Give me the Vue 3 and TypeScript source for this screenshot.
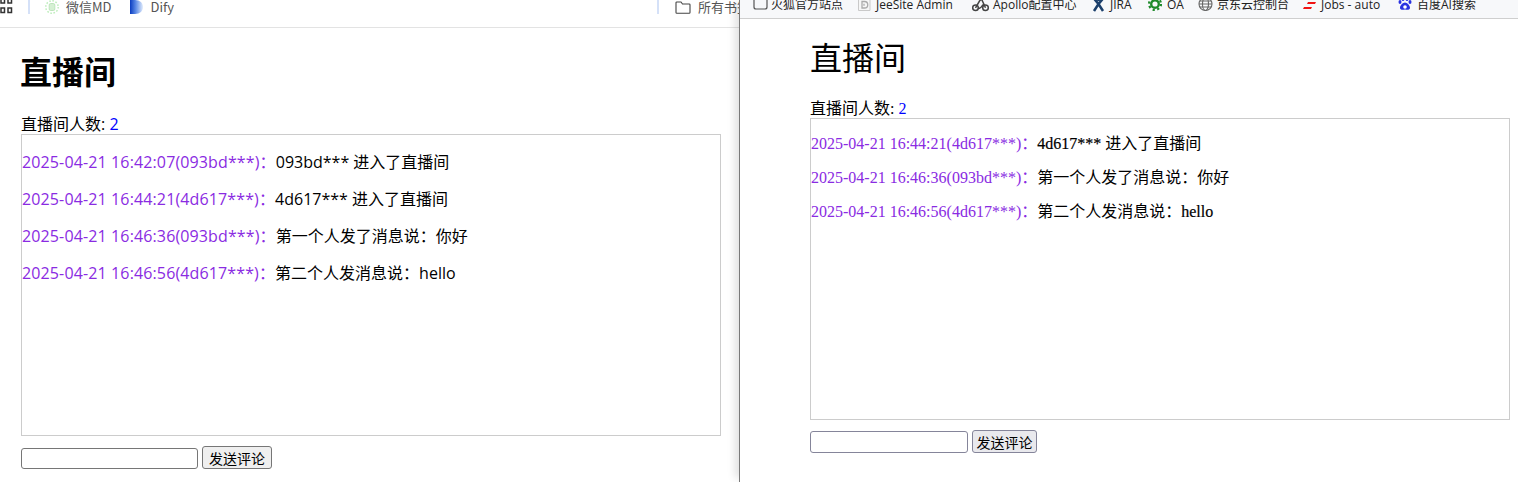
<script setup lang="ts">
interface Part { t: string; heavy?: boolean }
interface Msg { time: string; parts: Part[] }
const leftMsgs: Msg[] = [
  { time: '2025-04-21 16:42:07(093bd***)：', parts: [{ t: '093bd*** 进入了直播间' }] },
  { time: '2025-04-21 16:44:21(4d617***)：', parts: [{ t: '4d617*** 进入了直播间' }] },
  { time: '2025-04-21 16:46:36(093bd***)：', parts: [{ t: '第一个人发了消息说：你好' }] },
  { time: '2025-04-21 16:46:56(4d617***)：', parts: [{ t: '第二个人发消息说：hello' }] },
]
const rightMsgs: Msg[] = [
  { time: '2025-04-21 16:44:21(4d617***)：', parts: [{ t: '4d617***', heavy: true }, { t: ' 进入了直播间' }] },
  { time: '2025-04-21 16:46:36(093bd***)：', parts: [{ t: '第一个人发了消息说：你好' }] },
  { time: '2025-04-21 16:46:56(4d617***)：', parts: [{ t: '第二个人发消息说：' }, { t: 'hello', heavy: true }] },
]
</script>

<template>
  <div class="screen">
    <section class="pane left">
      <div class="bar bar-left">
        <svg class="apps" width="13" height="14" viewBox="0 0 13 14"><g fill="none" stroke="#333" stroke-width="1.500"><rect x="1" y="-3" width="3.500" height="6"/><rect x="8" y="-3" width="3.500" height="6"/><rect x="1" y="8" width="3.500" height="4.500"/><rect x="8" y="8" width="3.500" height="4.500"/></g></svg>
        <i class="sep first"></i>
        <svg class="ic" width="14" height="14" viewBox="0 0 14 14"><circle cx="7" cy="7" r="6.200" fill="none" stroke="#bfeebd" stroke-width="1.500" stroke-dasharray="1.600 1.600"/><rect x="4.200" y="3.500" width="5.600" height="7" rx="1.500" fill="#d5f0d3" stroke="#bde5bb"/></svg>
        <span class="bm wx">微信MD</span>
        <svg class="ic dify" width="13" height="14" viewBox="0 0 13 14"><defs><linearGradient id="d" x1="0" x2="1"><stop offset="0" stop-color="#0a3cc0"/><stop offset=".45" stop-color="#5d8be6"/><stop offset="1" stop-color="#e3edfc"/></linearGradient></defs><path d="M0 0h5c5 0 8 3 8 7s-3 7-8 7H0z" fill="url(#d)"/></svg>
        <span class="bm">Dify</span>
        <i class="sep second"></i>
        <svg class="ic folder" width="16" height="13" viewBox="0 0 16 13"><path d="M1 2.500V11.500a.8.8 0 0 0 .8.8h12.400a.8.8 0 0 0 .8-.8V3.800a.8.8 0 0 0-.8-.8H7.500L6 1H1.800A.8.8 0 0 0 1 1.800z" fill="none" stroke="#444" stroke-width="1.100"/></svg>
        <span class="bm clip">所有书签</span>
      </div>
      <div class="content content-left">
        <h1 class="title-left">直播间</h1>
        <div class="count count-left">直播间人数: <span class="num">2</span></div>
        <div class="box box-left">
          <p v-for="m in leftMsgs" :key="m.time" class="msg msg-left"><span class="time">{{ m.time }}</span><span v-for="p in m.parts" :key="p.t">{{ p.t }}</span></p>
        </div>
        <div class="form form-left">
          <input class="field field-left" type="text" />
          <button class="send" type="button">发送评论</button>
        </div>
      </div>
    </section>

    <section class="pane right">
      <div class="bar bar-right">
        <span class="rb b1"><svg width="15" height="12" viewBox="0 0 15 12"><path d="M1 -2V8a2 2 0 0 0 2 2h9a2 2 0 0 0 2-2V-2" fill="none" stroke="#555" stroke-width="1.200"/></svg>火狐官方站点</span>
        <span class="rb b2"><svg width="14" height="14" viewBox="0 0 14 14"><path d="M1.500 -1h9l2.500 3v10.500h-11.500z" fill="#f6f6f6" stroke="#c9c9c9"/><path d="M5 3.500h2.500a3.200 3.200 0 0 1 0 6.500H5zM7 5.800v2" fill="none" stroke="#aaa" stroke-width="1.300"/></svg>JeeSite Admin</span>
        <span class="rb b3"><svg width="17" height="14" viewBox="0 0 17 14"><g fill="none" stroke="#444" stroke-width="1.500"><circle cx="3.500" cy="9.800" r="2.800"/><circle cx="13.500" cy="9.800" r="2.800"/><path d="M3.500 9.800 7.500 3l2-2 4 8.800M6 10.500c2.500 0 4-2 5-4"/></g></svg>Apollo配置中心</span>
        <span class="rb b4"><svg width="13" height="14" viewBox="0 0 13 14"><circle cx="6.500" cy="1.500" r="1.800" fill="#1b3f6b"/><path d="M1.500 0 6.500 6 11.500 0M6.500 6 2 13M6.500 6 11 13" fill="none" stroke="#1b3f6b" stroke-width="2.500"/></svg>JIRA</span>
        <span class="rb b5"><svg width="14" height="14" viewBox="0 0 14 14"><circle cx="7" cy="6" r="3.800" fill="none" stroke="#1e8a2a" stroke-width="2.400"/><circle cx="7" cy="6" r="6" fill="none" stroke="#1e8a2a" stroke-width="2.200" stroke-dasharray="2.200 2.500"/></svg>OA</span>
        <span class="rb b6"><svg width="15" height="14" viewBox="0 0 15 14"><g fill="none" stroke="#666" stroke-width="1.100"><circle cx="7.500" cy="6" r="6.500"/><ellipse cx="7.500" cy="6" rx="3" ry="6.500"/><path d="M1 6h13M2 3h11M2 9h11"/></g></svg>京东云控制台</span>
        <span class="rb b7"><svg width="13" height="12" viewBox="0 0 13 12"><path d="M5 3h8l-1 2H4zM1 8h8L8 10H0z" fill="#f01414"/></svg>Jobs - auto</span>
        <span class="rb b8"><svg width="14" height="14" viewBox="0 0 14 14"><g fill="#2932e1"><ellipse cx="2" cy="4" rx="1.500" ry="2"/><ellipse cx="5" cy="1" rx="1.500" ry="2"/><ellipse cx="9" cy="1" rx="1.500" ry="2"/><ellipse cx="12" cy="4" rx="1.500" ry="2"/></g><path d="M7 4.500c-2 0-5 3-5 5.200 0 2.300 2.500 2.300 5 1.700 2.500.6 5 .6 5-1.700 0-2.200-3-5.200-5-5.200z" fill="#2932e1"/><circle cx="7" cy="9" r="1.800" fill="#fff"/></svg>百度AI搜索</span>
      </div>
      <div class="content content-right">
        <h1 class="title-right">直播间</h1>
        <div class="count">直播间人数: <span class="num">2</span></div>
        <div class="box">
          <p v-for="m in rightMsgs" :key="m.time" class="msg"><span class="time">{{ m.time }}</span><span v-for="p in m.parts" :key="p.t" :class="{ heavy: p.heavy }">{{ p.t }}</span></p>
        </div>
        <div class="form">
          <input class="field field-right" type="text" />
          <button class="send send-right" type="button">发送评论</button>
        </div>
      </div>
    </section>
  </div>
</template>

<style>
html, body { margin: 0; background: #fff; overflow: hidden; }
</style>

<style scoped>
.screen {
  display: flex;
  width: 1518px;
  height: 482px;
  overflow: hidden;
  background: #fff;
  color: #000;
}
.pane { height: 482px; box-sizing: border-box; overflow: hidden; }
.left {
  width: 739px;
  flex: none;
  font-family: "Open Sans", "Noto Sans CJK SC", sans-serif;
}
.right {
  flex: 1;
  border-left: 1px solid #7a7a7a;
  box-shadow: -8px 0 8px -4px rgba(0, 0, 0, .12);
  position: relative;
  font-family: "Liberation Serif", "Noto Sans CJK SC", serif;
}
.bar { display: flex; align-items: center; box-sizing: border-box; overflow: hidden; white-space: nowrap; }
.bar-left { height: 28px; border-bottom: 1px solid #e3e3e3; padding: 0 0 13px; font: 13px/14px "Noto Sans CJK SC", "Liberation Sans", sans-serif; color: #555; }
.apps { flex: none; }
.sep { flex: none; width: 2px; height: 14px; background: #d5e1f8; }
.sep.first { margin: 0 15px; }
.sep.second { margin: 0 16px 0 auto; }
.ic { flex: none; margin-right: 7px; }
.dify { margin-right: 8px; }
.bm { flex: none; line-height: 14px; }
.wx { margin-right: 18px; }
.clip { width: 41px; overflow: hidden; }
.bar-right {
  height: 19px;
  background: #f7f8fa;
  border-bottom: 1px solid #cfcfcf;
  padding: 0 0 8px 13px;
  font: 12px/12px "Open Sans", "Noto Sans CJK SC", sans-serif;
  color: #222;
}
.rb { display: inline-flex; align-items: center; gap: 4px; line-height: 12px; flex: none; }
.rb svg { flex: none; }
.b1 { width: 104px; gap: 3px; }
.b2 { width: 115px; gap: 5px; }
.b3 { width: 120px; gap: 4px; }
.b4 { width: 56px; gap: 5px; }
.b5 { width: 50px; gap: 5px; }
.b6 { width: 105px; gap: 4px; }
.b7 { width: 95px; gap: 5px; }
.b8 { gap: 5px; }

.content-left { padding: 0 0 0 21px; }
.content-right { padding: 0 0 0 70px; }
.title-left { margin: 23px 0 21px -1px; font-size: 32px; line-height: 42px; font-weight: 700; }
.title-right { margin: 21px 0 21px; font-size: 32px; line-height: 38px; font-weight: 400; }
.count { font-size: 16px; line-height: 19px; }
.count-left { line-height: 20px; }
.num { color: #00f; }
.box {
  box-sizing: border-box;
  width: 700px;
  height: 302px;
  border: 1px solid #ccc;
  overflow: hidden;
}
.box-left { padding-top: 1px; }
.msg { margin: 16px 0; font-size: 16px; line-height: 18px; }
.msg-left { line-height: 21px; }
.msg-left .time { letter-spacing: .13px; }
.time { color: #8a2be2; }
.heavy { -webkit-text-stroke: .2px #000; }
.form { display: flex; align-items: flex-end; gap: 4px; margin-top: 10px; }
.field {
  box-sizing: border-box;
  height: 21px;
  padding: 1px 2px;
  border: 1px solid #767676;
  border-radius: 3px;
  background: #fff;
  font: 13px "Liberation Sans", sans-serif;
}
.field-left { width: 177px; }
.field-right { width: 158px; height: 22px; border-color: #85859a; }
.send {
  box-sizing: border-box;
  width: 70px;
  height: 23px;
  padding: 0;
  border: 1px solid #767676;
  border-radius: 3px;
  background: #efefef;
  color: #000;
  font: 14px "Liberation Sans", "Noto Sans CJK SC", sans-serif;
}
.send-right { width: 65px; border-color: #85859a; background: #e9e9ed; }
</style>
